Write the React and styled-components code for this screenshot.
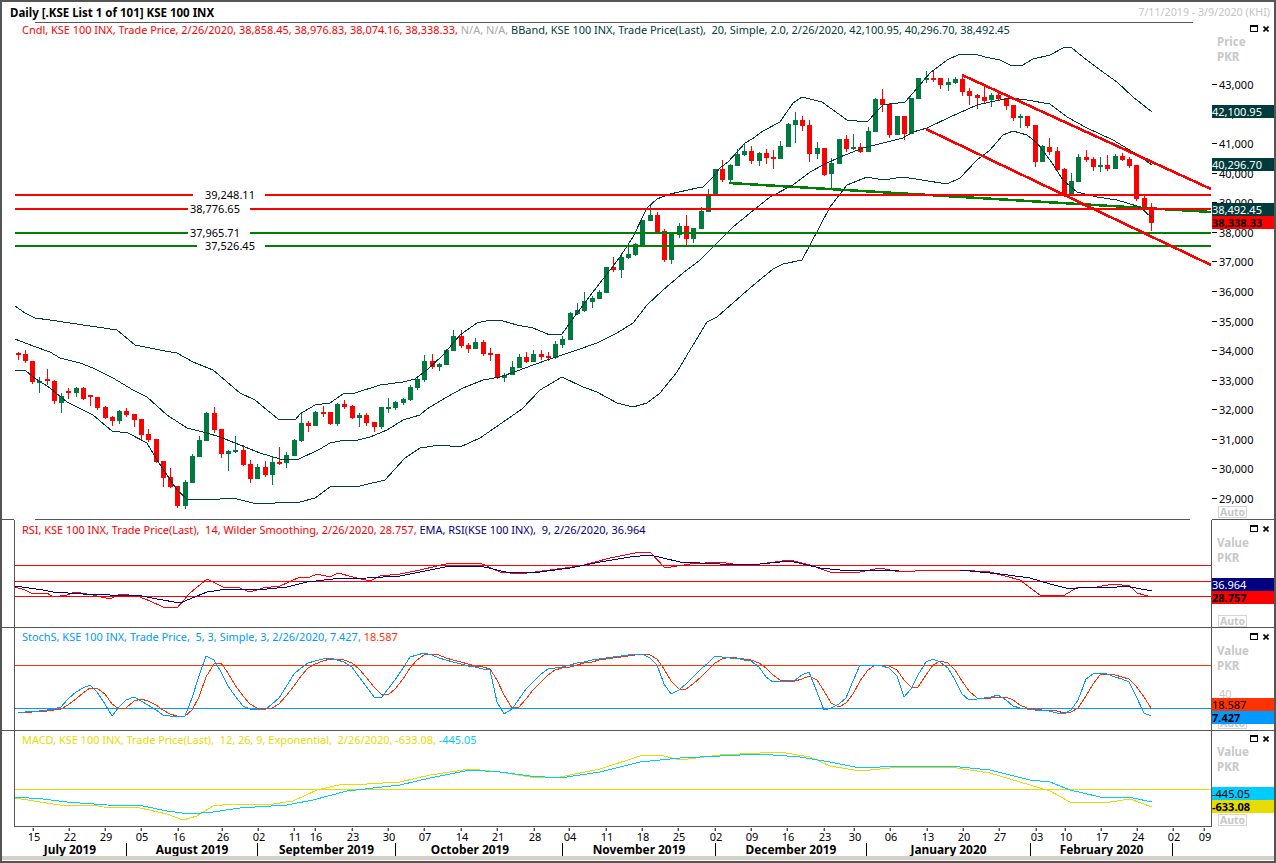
import React from 'react';
import styled, { createGlobalStyle } from 'styled-components';

/* Chart data, all in screen pixels */
// [green, high, bodyTop, bodyBottom, low]
const CANDLES = [
  [0,352,353,355,360],[0,350,354,361,363],[0,361,361,382,384],[1,377,381,383,393],[0,369,379,381,385],
  [0,380,381,401,404],[1,393,396,403,413],[0,388,391,393,399],[1,387,388,393,397],[0,387,388,399,400],
  [0,395,395,397,406],[0,397,397,408,410],[0,406,407,418,419],[0,416,417,421,426],[1,410,411,421,424],
  [0,408,411,415,417],[0,414,414,420,427],[0,419,419,435,440],[0,429,434,440,442],[0,439,439,462,463],
  [0,461,461,478,487],[0,468,477,487,488],[0,486,486,506,508],[1,480,482,506,509],[1,454,456,483,483],
  [1,436,440,457,457],[1,412,413,441,441],[0,407,413,430,433],[0,429,429,454,458],[1,450,451,454,471],
  [1,436,450,452,453],[0,445,450,465,466],[0,460,464,479,483],[1,464,467,479,479],[0,461,467,475,477],
  [1,457,462,475,485],[0,447,462,463,465],[1,452,455,463,468],[1,439,440,456,456],[1,414,423,441,442],
  [0,421,423,426,432],[1,411,412,426,426],[0,406,412,413,417],[0,412,412,424,425],[1,403,404,424,426],
  [0,400,404,407,409],[0,405,406,418,419],[1,413,415,418,427],[0,413,415,423,426],[0,422,422,427,432],
  [1,407,407,427,429],[1,398,407,408,413],[1,401,402,408,410],[1,398,399,403,405],[1,385,387,400,401],
  [1,378,379,388,390],[1,355,361,380,382],[0,354,361,367,369],[1,363,364,367,371],[1,349,350,365,365],
  [1,330,336,351,351],[0,330,336,346,348],[0,343,345,349,353],[1,338,342,349,349],[0,340,342,354,356],
  [0,348,353,355,361],[0,354,354,378,379],[1,373,375,378,382],[1,361,367,375,375],[1,354,357,368,368],
  [0,352,357,362,363],[1,350,354,362,362],[0,350,354,357,360],[0,352,356,358,361],[1,341,344,358,359],
  [1,336,339,345,348],[1,312,313,340,340],[1,303,310,314,315],[1,292,301,311,312],[1,296,298,302,308],
  [1,290,292,299,299],[1,267,267,293,293],[0,257,267,270,272],[1,253,257,270,278],[1,246,254,258,259],
  [1,243,244,255,256],[1,220,220,246,246],[1,205,215,221,221],[0,212,215,233,233],[0,229,231,260,262],
  [1,233,233,260,264],[1,223,226,235,238],[0,215,226,239,245],[1,228,228,239,243],[1,207,211,229,229],
  [1,189,196,212,212],[1,169,169,194,194],[0,160,169,180,182],[1,164,165,180,184],[1,149,154,166,166],
  [1,144,151,155,156],[0,146,151,161,164],[1,152,153,161,166],[0,149,153,158,164],[0,150,157,159,169],
  [1,141,146,159,159],[1,123,124,147,147],[1,112,120,125,143],[0,116,120,126,131],[0,120,125,154,162],
  [1,142,148,154,159],[0,148,148,175,176],[1,158,163,174,189],[1,139,139,164,164],[0,135,139,149,152],
  [1,134,147,149,150],[0,143,147,152,153],[1,127,131,152,152],[1,98,99,132,132],[0,89,99,105,112],
  [0,103,104,135,138],[1,116,116,135,135],[0,116,116,134,140],[1,98,98,134,134],[1,78,78,99,99],
  [1,71,78,79,83],[0,70,78,79,82],[0,78,78,85,89],[1,78,82,85,91],[1,77,79,83,84],
  [0,75,79,92,96],[0,88,91,96,105],[0,94,95,98,109],[0,86,97,101,103],[1,93,95,100,107],
  [0,92,95,99,101],[0,98,98,106,110],[0,105,105,118,121],[1,114,116,118,128],[0,116,116,126,128],
  [0,125,125,162,167],[1,145,146,162,162],[0,138,147,152,155],[0,147,151,170,171],[0,168,169,196,197],
  [1,173,181,194,194],[1,154,157,182,182],[0,150,157,160,162],[0,157,159,167,171],[1,157,165,167,172],
  [0,155,165,169,171],[1,154,156,169,169],[0,153,156,160,161],[0,157,159,166,168],[0,165,165,199,201],
  [0,196,198,207,208],[0,203,207,223,231],
];
const candleX = (i) => Math.round(17.5 + 7.266 * i);

const BAND_UPPER = [[15,306],[25,313],[35,318],[50,320],[70,323],[90,326],[117,330],[135,345],[165,351],[177,353],[193,362],[213,370],[240,393],[255,400],[278,419],[295,420],[300,414],[315,405],[330,403],[343,394],[355,393],[380,385],[403,382],[415,379],[427,370],[443,355],[460,335],[477,323],[490,320],[503,321],[517,325],[533,328],[550,335],[562,334],[577,313],[593,292],[610,270],[620,257],[633,237],[647,208],[657,199],[670,194],[697,188],[703,187],[712,178],[720,168],[728,162],[737,152],[745,143],[752,139],[763,131],[780,122],[793,103],[802,97],[822,102],[847,120],[867,122],[883,105],[905,102],[913,93],[930,73],[947,60],[960,54],[975,54],[985,57],[1000,60],[1010,65],[1023,65],[1033,59],[1050,55],[1065,47],[1072,48],[1083,57],[1100,70],[1117,82],[1133,97],[1152,112]];
const BAND_MID = [[15,339],[33,346],[50,352],[60,358],[80,363],[93,368],[113,378],[133,390],[147,397],[167,415],[187,428],[207,433],[220,437],[240,445],[260,453],[280,459],[297,460],[320,449],[330,443],[340,441],[358,440],[370,437],[387,430],[403,420],[420,415],[427,409],[447,397],[463,388],[483,380],[500,377],[517,371],[533,365],[553,358],[577,350],[597,343],[617,333],[633,323],[647,305],[663,290],[683,273],[700,260],[717,243],[733,227],[750,213],[770,197],[793,185],[810,172],[823,165],[840,157],[863,148],[887,142],[903,138],[913,132],[927,128],[950,117],[977,105],[990,102],[1010,98],[1027,100],[1050,104],[1067,117],[1087,128],[1113,140],[1133,152],[1152,165]];
const BAND_LOWER = [[15,370],[25,370],[33,377],[50,388],[67,402],[93,415],[112,431],[128,433],[147,443],[157,460],[177,490],[187,499],[207,500],[233,498],[253,503],[267,504],[283,502],[300,502],[315,498],[330,487],[360,486],[385,480],[405,458],[420,448],[440,445],[460,447],[480,438],[522,409],[540,390],[562,377],[583,387],[597,392],[617,403],[633,407],[647,403],[660,393],[677,372],[690,350],[707,322],[717,317],[733,303],[750,288],[773,269],[783,264],[802,260],[810,245],[830,207],[847,185],[867,177],[883,180],[903,177],[947,184],[960,178],[977,160],[990,150],[1003,135],[1013,131],[1027,135],[1037,143],[1050,160],[1063,180],[1077,192],[1097,197],[1117,200],[1140,207],[1152,218]];

const RSI_LINE = [[15,587],[25,590],[33,594],[47,593],[53,597],[67,595],[75,592],[93,595],[110,599],[120,594],[137,596],[150,601],[163,607],[177,608],[190,593],[207,579],[223,587],[237,587],[250,592],[263,588],[280,586],[300,577],[310,577],[317,574],[330,577],[338,573],[353,577],[370,581],[380,576],[400,574],[420,570],[450,563],[480,563],[500,572],[520,574],[550,570],[580,566],[610,558],[640,552],[650,552],[665,568],[690,564],[720,562],[745,566],[790,560],[810,565],[830,572],[860,572],[880,568],[900,572],[930,570],[960,570],[990,572],[1020,580],[1040,595],[1063,596],[1078,587],[1097,587],[1113,584],[1130,586],[1137,593],[1151,597]];
const RSI_EMA = [[15,586],[43,590],[53,592],[83,594],[110,595],[137,595],[157,599],[180,603],[207,592],[227,589],[267,589],[287,587],[307,582],[333,579],[367,578],[400,576],[420,572],[450,566],[480,566],[510,573],[540,572],[570,568],[600,562],[630,557],[650,555],[680,562],[720,564],[760,564],[790,561],[820,568],[850,571],[900,570],[960,570],[1000,574],[1030,578],[1050,584],[1070,589],[1087,587],[1110,588],[1125,586],[1152,591]];

const STOCH_K = [[15,712],[40,711],[60,708],[75,692],[90,685],[100,695],[112,716],[125,700],[135,697],[150,706],[165,716],[185,716],[195,690],[205,655],[215,660],[230,690],[245,708],[265,710],[280,697],[295,672],[310,662],[330,658],[350,664],[365,685],[378,702],[395,680],[410,657],[425,653],[445,660],[470,666],[490,670],[500,715],[510,712],[525,690],[545,670],[570,665],[590,660],[610,657],[640,653],[655,660],[668,695],[680,690],[695,675],[715,656],[735,658],[755,662],[770,682],[795,680],[808,670],[825,712],[845,700],[860,665],[880,665],[895,670],[905,700],[925,662],[935,658],[950,670],[965,700],[985,698],[1000,695],[1015,708],[1040,710],[1065,714],[1075,708],[1085,680],[1095,672],[1110,675],[1125,680],[1130,683],[1143,712],[1152,717]];

const MACD_LINE = [[15,798],[40,802],[60,805],[93,805],[103,807],[140,808],[167,814],[183,820],[197,816],[213,806],[233,804],[267,805],[293,801],[317,790],[343,784],[367,784],[400,782],[430,775],[470,769],[500,772],[530,777],[560,777],[600,769],[640,756],[660,755],[680,760],[720,755],[780,752],[810,757],[830,766],[860,771],[900,767],[950,767],[990,773],[1030,785],[1050,791],[1070,802],[1090,802],[1110,802],[1130,799],[1152,807]];
const MACD_SIGNAL = [[15,797],[43,799],[67,802],[107,805],[143,806],[167,811],[190,814],[213,812],[240,808],[287,805],[313,800],[347,791],[400,785],[430,778],[470,770],[500,772],[530,776],[560,778],[600,772],[640,762],[680,758],[720,756],[760,754],[800,757],[830,762],[860,768],[900,766],[950,766],[990,770],[1030,780],[1050,782],[1070,790],[1100,797],[1133,798],[1152,802]];

const PRICE_TICKS = [[43,85],[42,114],[41,144],[40,174],[39,203],[38,233],[37,262],[36,292],[35,322],[34,351],[33,381],[32,410],[31,440],[30,469],[29,499]];

const LEVELS = [
  { y: 195, label: '39,248.11', color: '#ff0000', gapFrom: 193, gapTo: 265, textX: 205 },
  { y: 209, label: '38,776.65', color: '#ff0000', gapFrom: 188, gapTo: 250, textX: 190 },
  { y: 233, label: '37,965.71', color: '#008000', gapFrom: 188, gapTo: 250, textX: 190 },
  { y: 246, label: '37,526.45', color: '#008000', gapFrom: 197, gapTo: 265, textX: 205 },
];

const DATE_TICKS = [
  ['15',34],['22',70],['29',106],['05',142],['16',179],['26',223],['02',259],['11',295],['16',316],['23',353],['30',389],
  ['07',425],['14',462],['21',498],['28',535],['04',570],['11',607],['18',643],['25',679],['02',716],['09',752],['16',788],
  ['23',825],['30',855],['06',891],['13',928],['20',964],['27',1000],['03',1037],['10',1066],['17',1102],['24',1138],['02',1174],['09',1205],
];

// name, cell width, room kept free on the right of the name
const MONTHS = [
  ['July 2019',113,0],['August 2019',131,0],['September 2019',138,0],['October 2019',167,18],['November 2019',153,0],
  ['December 2019',151,0],['January 2020',164,0],['February 2020',142,0],['',39,0],
];

/* Component Styling */
const GlobalStyle = createGlobalStyle`
  html, body { margin: 0; background: #fff; overflow: hidden; }
`;
const Window = styled.div`
  width: 1276px;
  height: 863px;
  box-sizing: border-box;
  border: 2px solid #555;
  background: #fff;
  display: flex;
  flex-direction: column;
  font-family: "Noto Sans", "Liberation Sans", sans-serif;
  font-size: 10.7px;
  color: #000;
  overflow: hidden;
`;
const TitleBar = styled.div`
  height: 20px;
  display: flex;
  align-items: center;
  justify-content: space-between;
  padding: 0 4px 0 8px;
`;
const Title = styled.div`
  font-weight: 700;
  font-size: 11.5px;
`;
const DateRange = styled.div`
  color: #c4c4c4;
`;
const HeaderRule = styled.div`
  height: 1px;
  margin: 0 81px 0 33px;
  background: #555;
`;
const GapRule = styled.div`
  height: 1px;
  flex: none;
  background: linear-gradient(to right, #555 12px, transparent 12px, transparent 33px, #555 33px, #555 1188px, transparent 1188px, transparent 1210px, #555 1210px);
`;
const Rule = styled.div`
  height: 1px;
  flex: none;
  background: #555;
`;
const Panel = styled.div`
  display: flex;
  flex: none;
  height: ${(p) => p.$height}px;
`;
const Gutter = styled.div`
  width: 12px;
  flex: none;
`;
const Plot = styled.div`
  position: relative;
  width: 1198px;
  flex: none;
  box-sizing: border-box;
  border-left: 1px solid ${(p) => (p.$framed ? '#555' : 'transparent')};
  border-right: 1px solid ${(p) => (p.$framed ? '#555' : 'transparent')};
  border-bottom: ${(p) => (p.$closed ? '1px solid #555' : 'none')};
`;
const ChartSvg = styled.svg`
  display: block;
  width: 100%;
  height: 100%;
  shape-rendering: crispEdges;
  text {
    font-family: "Noto Sans", "Liberation Sans", sans-serif;
    font-size: 11px;
    shape-rendering: auto;
  }
`;
const Legend = styled.div`
  position: absolute;
  left: 7px;
  top: ${(p) => p.$top}px;
  line-height: 14px;
  font-size: 10.95px;
  white-space: pre;
  color: ${(p) => p.$color};
`;
const Hue = styled.span`
  color: ${(p) => p.$color};
`;
const Axis = styled.div`
  position: relative;
  width: 62px;
  flex: none;
  padding: ${(p) => p.$pad}px 0 0 5px;
  box-sizing: border-box;
`;
const UnitLabel = styled.div`
  color: #c8c8c8;
  font-weight: 700;
  font-size: 11.5px;
  line-height: 15px;
`;
const PaneButtons = styled.div`
  position: absolute;
  top: ${(p) => p.$top}px;
  right: 5px;
  display: flex;
  align-items: center;
  gap: 5px;
`;
const PriceTick = styled.div`
  position: absolute;
  left: 7px;
  transform: translateY(-50%);
  line-height: 14px;
  font-size: 11px;
  &::before {
    content: '';
    position: absolute;
    left: -7px;
    top: 6px;
    width: 5px;
    height: 1px;
    background: #000;
  }
`;
const ValueTag = styled.div`
  position: absolute;
  left: 0;
  right: 0;
  height: 13px;
  line-height: 13px;
  font-size: 11px;
  overflow: hidden;
  background: ${(p) => p.$bg};
  color: ${(p) => p.$fg};
  font-weight: ${(p) => (p.$bold ? 700 : 400)};
  z-index: 2;
`;
const FaintTick = styled.div`
  position: absolute;
  left: 7px;
  color: #c8c8c8;
  font-size: 11px;
  line-height: 14px;
`;
const AutoBox = styled.div`
  position: absolute;
  left: 6px;
  bottom: ${(p) => p.$bottom}px;
  width: 29px;
  height: 12px;
  box-sizing: border-box;
  border: 1px solid #d4d4d4;
  color: #c8c8c8;
  font-weight: 700;
  font-size: 10.5px;
  line-height: 10px;
  text-align: center;
`;
const TimeAxis = styled.div`
  height: 29px;
  flex: none;
  padding-left: 12px;
`;
const DateRow = styled.div`
  position: relative;
  height: 16px;
`;
const DateLabel = styled.div`
  position: absolute;
  top: 3px;
  transform: translateX(-50%);
  line-height: 13px;
  font-size: 11px;
  &::before {
    content: '';
    position: absolute;
    left: calc(50% - 1px);
    top: -2px;
    width: 1px;
    height: 3px;
    background: #000;
  }
`;
const MonthRow = styled.div`
  display: flex;
  height: 13px;
`;
const Month = styled.div`
  box-sizing: border-box;
  flex: none;
  width: ${(p) => p.$width}px;
  padding-right: ${(p) => p.$room}px;
  text-align: center;
  font-weight: 700;
  font-size: 11.9px;
  line-height: 13px;
  border-right: ${(p) => (p.$open ? 'none' : '1px solid #000')};
`;
const ScrollBand = styled.div`
  height: 4px;
  flex: none;
  background: #d4d0c8;
`;

/* Helpers */
const toPoints = (pts) => pts.map((p) => p.join(',')).join(' ');

const valueAt = (pts, x) => {
  for (let i = 1; i < pts.length; i++) {
    if (x <= pts[i][0]) {
      const [x0, y0] = pts[i - 1];
      const [x1, y1] = pts[i];
      return y0 + ((y1 - y0) * (x - x0)) / (x1 - x0);
    }
  }
  return pts[pts.length - 1][1];
};

// %D is a 3 period average of %K
const stochK = CANDLES.map((c, i) => [candleX(i), Math.round(valueAt(STOCH_K, candleX(i)))]);
const stochD = stochK.map(([x], i) => {
  const from = Math.max(0, i - 2);
  const win = stochK.slice(from, i + 1);
  return [x, Math.round(win.reduce((s, p) => s + p[1], 0) / win.length)];
});

/* Components */
const Line = ({ pts, color, width = 1 }) => (
  <polyline points={toPoints(pts)} fill="none" stroke={color} strokeWidth={width} />
);

const Candle = ({ data, x }) => {
  const [green, high, top, bottom, low] = data;
  const fill = green ? '#007a3e' : '#ff0000';
  return (
    <g fill={fill}>
      <rect x={x} y={high} width={1} height={low - high} />
      <rect x={x - 2} y={top} width={5} height={Math.max(bottom - top, 2)} />
    </g>
  );
};

const Level = ({ y, label, color, gapFrom, gapTo, textX }) => (
  <g>
    <rect x={15} y={y - 1} width={gapFrom - 15} height={2} fill={color} />
    <rect x={gapTo} y={y - 1} width={1211 - gapTo} height={2} fill={color} />
    <text x={textX} y={y + 4} fill="#000">{label}</text>
  </g>
);

const PaneIcons = ({ top }) => (
  <PaneButtons $top={top}>
    <svg width="8" height="7" viewBox="0 0 8 7">
      <rect x="0.5" y="0.5" width="7" height="6" fill="none" stroke="#000" />
      <rect x="0" y="0" width="8" height="2" fill="#000" />
    </svg>
    <svg width="6" height="6" viewBox="0 0 6 6">
      <path d="M0.5 0.5 L5.5 5.5 M5.5 0.5 L0.5 5.5" stroke="#000" strokeWidth="1.6" fill="none" />
    </svg>
  </PaneButtons>
);

const PriceChart = () => (
  <ChartSvg viewBox="15 23 1196 496">
    <Line pts={[[729,183],[1211,212]]} color="#008000" width={2.5} />
    {CANDLES.map((c, i) => <Candle key={i} data={c} x={candleX(i)} />)}
    <Line pts={BAND_UPPER} color="#003c3c" />
    <Line pts={BAND_MID} color="#003c3c" />
    <Line pts={BAND_LOWER} color="#003c3c" />
    {LEVELS.map((l) => <Level key={l.y} {...l} />)}
    <Line pts={[[962,75],[1211,189]]} color="#ff0000" width={2.6} />
    <Line pts={[[926,129],[1211,265]]} color="#ff0000" width={2.6} />
  </ChartSvg>
);

const RsiChart = () => (
  <ChartSvg viewBox="15 520 1196 107">
    {[565, 581, 596].map((y) => <rect key={y} x={15} y={y} width={1196} height={1} fill="#ff0000" />)}
    <Line pts={RSI_LINE} color="#ff0000" />
    <Line pts={RSI_EMA} color="#000080" />
  </ChartSvg>
);

const StochChart = () => (
  <ChartSvg viewBox="15 628 1196 102">
    <rect x={15} y={665} width={1196} height={1} fill="#ff3300" />
    <rect x={15} y={708} width={1196} height={1} fill="#0099ff" />
    <Line pts={stochD} color="#ff3300" />
    <Line pts={stochK} color="#0099ff" />
  </ChartSvg>
);

const MacdChart = () => (
  <ChartSvg viewBox="15 731 1196 95">
    <rect x={15} y={789} width={1196} height={1} fill="#e6dc00" />
    <Line pts={MACD_LINE} color="#e6dc00" />
    <Line pts={MACD_SIGNAL} color="#00ccff" />
  </ChartSvg>
);

export default function App() {
  return (
    <Window>
      <GlobalStyle />
      <TitleBar>
        <Title>Daily [.KSE List 1 of 101] KSE 100 INX</Title>
        <DateRange>7/11/2019 - 3/9/2020 (KHI)</DateRange>
      </TitleBar>
      <HeaderRule />

      <Panel $height={496}>
        <Gutter />
        <Plot>
          <PriceChart />
          <Legend $top={0} $color="#ff0000">
            {'Cndl, KSE 100 INX, Trade Price, 2/26/2020, 38,858.45, 38,976.83, 38,074.16, 38,338.33, '}
            <Hue $color="#a8a8a8">{'N/A, N/A, '}</Hue>
            <Hue $color="#003c3c">{'BBand, KSE 100 INX, Trade Price(Last),  20, Simple, 2.0, 2/26/2020, 42,100.95, 40,296.70, 38,492.45'}</Hue>
          </Legend>
        </Plot>
        <Axis $pad={11}>
          <PaneIcons top={2} />
          <UnitLabel>Price</UnitLabel>
          <UnitLabel>PKR</UnitLabel>
          {PRICE_TICKS.map(([k, y]) => (
            <PriceTick key={k} style={{ top: y - 23 }}>{k},000</PriceTick>
          ))}
          <ValueTag $bg="#003c3c" $fg="#fff" style={{ top: 82 }}>42,100.95</ValueTag>
          <ValueTag $bg="#003c3c" $fg="#fff" style={{ top: 135 }}>40,296.70</ValueTag>
          <ValueTag $bg="#003c3c" $fg="#fff" style={{ top: 180 }}>38,492.45</ValueTag>
          <ValueTag $bg="#ff0000" $fg="#000" $bold style={{ top: 193 }}>38,338.33</ValueTag>
          <AutoBox $bottom={1}>Auto</AutoBox>
        </Axis>
      </Panel>
      <GapRule />

      <Panel $height={107}>
        <Gutter />
        <Plot $framed>
          <RsiChart />
          <Legend $top={3} $color="#ff0000">
            {'RSI, KSE 100 INX, Trade Price(Last),  14, Wilder Smoothing, 2/26/2020, 28.757, '}
            <Hue $color="#000080">{'EMA, RSI(KSE 100 INX),  9, 2/26/2020, 36.964'}</Hue>
          </Legend>
        </Plot>
        <Axis $pad={15}>
          <PaneIcons top={5} />
          <UnitLabel>Value</UnitLabel>
          <UnitLabel>PKR</UnitLabel>
          <ValueTag $bg="#000080" $fg="#fff" style={{ top: 58 }}>36.964</ValueTag>
          <ValueTag $bg="#ff0000" $fg="#000" $bold style={{ top: 71 }}>28.757</ValueTag>
          <AutoBox $bottom={0}>Auto</AutoBox>
        </Axis>
      </Panel>
      <Rule />

      <Panel $height={102}>
        <Gutter />
        <Plot $framed>
          <StochChart />
          <Legend $top={2} $color="#0099ff">
            {'StochS, KSE 100 INX, Trade Price,  5, 3, Simple, 3, 2/26/2020, 7.427, '}
            <Hue $color="#ff3300">18.587</Hue>
          </Legend>
        </Plot>
        <Axis $pad={15}>
          <PaneIcons top={5} />
          <UnitLabel>Value</UnitLabel>
          <UnitLabel>PKR</UnitLabel>
          <FaintTick style={{ top: 59 }}>40</FaintTick>
          <ValueTag $bg="#ff3300" $fg="#000" style={{ top: 70 }}>18.587</ValueTag>
          <ValueTag $bg="#0099ff" $fg="#000" $bold style={{ top: 83 }}>7.427</ValueTag>
          <AutoBox $bottom={1}>Auto</AutoBox>
        </Axis>
      </Panel>
      <Rule />

      <Panel $height={96}>
        <Gutter />
        <Plot $framed $closed>
          <MacdChart />
          <Legend $top={2} $color="#e6dc00">
            {'MACD, KSE 100 INX, Trade Price(Last),  12, 26, 9, Exponential,  2/26/2020, -633.08, '}
            <Hue $color="#00ccff">-445.05</Hue>
          </Legend>
        </Plot>
        <Axis $pad={13}>
          <PaneIcons top={4} />
          <UnitLabel>Value</UnitLabel>
          <UnitLabel>PKR</UnitLabel>
          <ValueTag $bg="#00ccff" $fg="#000" style={{ top: 56 }}>-445.05</ValueTag>
          <ValueTag $bg="#e6dc00" $fg="#000" $bold style={{ top: 69 }}>-633.08</ValueTag>
          <AutoBox $bottom={1}>Auto</AutoBox>
        </Axis>
      </Panel>

      <TimeAxis>
        <DateRow>
          {DATE_TICKS.map(([label, x], i) => (
            <DateLabel key={i} style={{ left: x - 14 }}>{label}</DateLabel>
          ))}
        </DateRow>
        <MonthRow>
          {MONTHS.map(([name, width, room], i) => (
            <Month key={i} $width={width} $room={room} $open={!name}>{name}</Month>
          ))}
        </MonthRow>
      </TimeAxis>
      <ScrollBand />
    </Window>
  );
}
